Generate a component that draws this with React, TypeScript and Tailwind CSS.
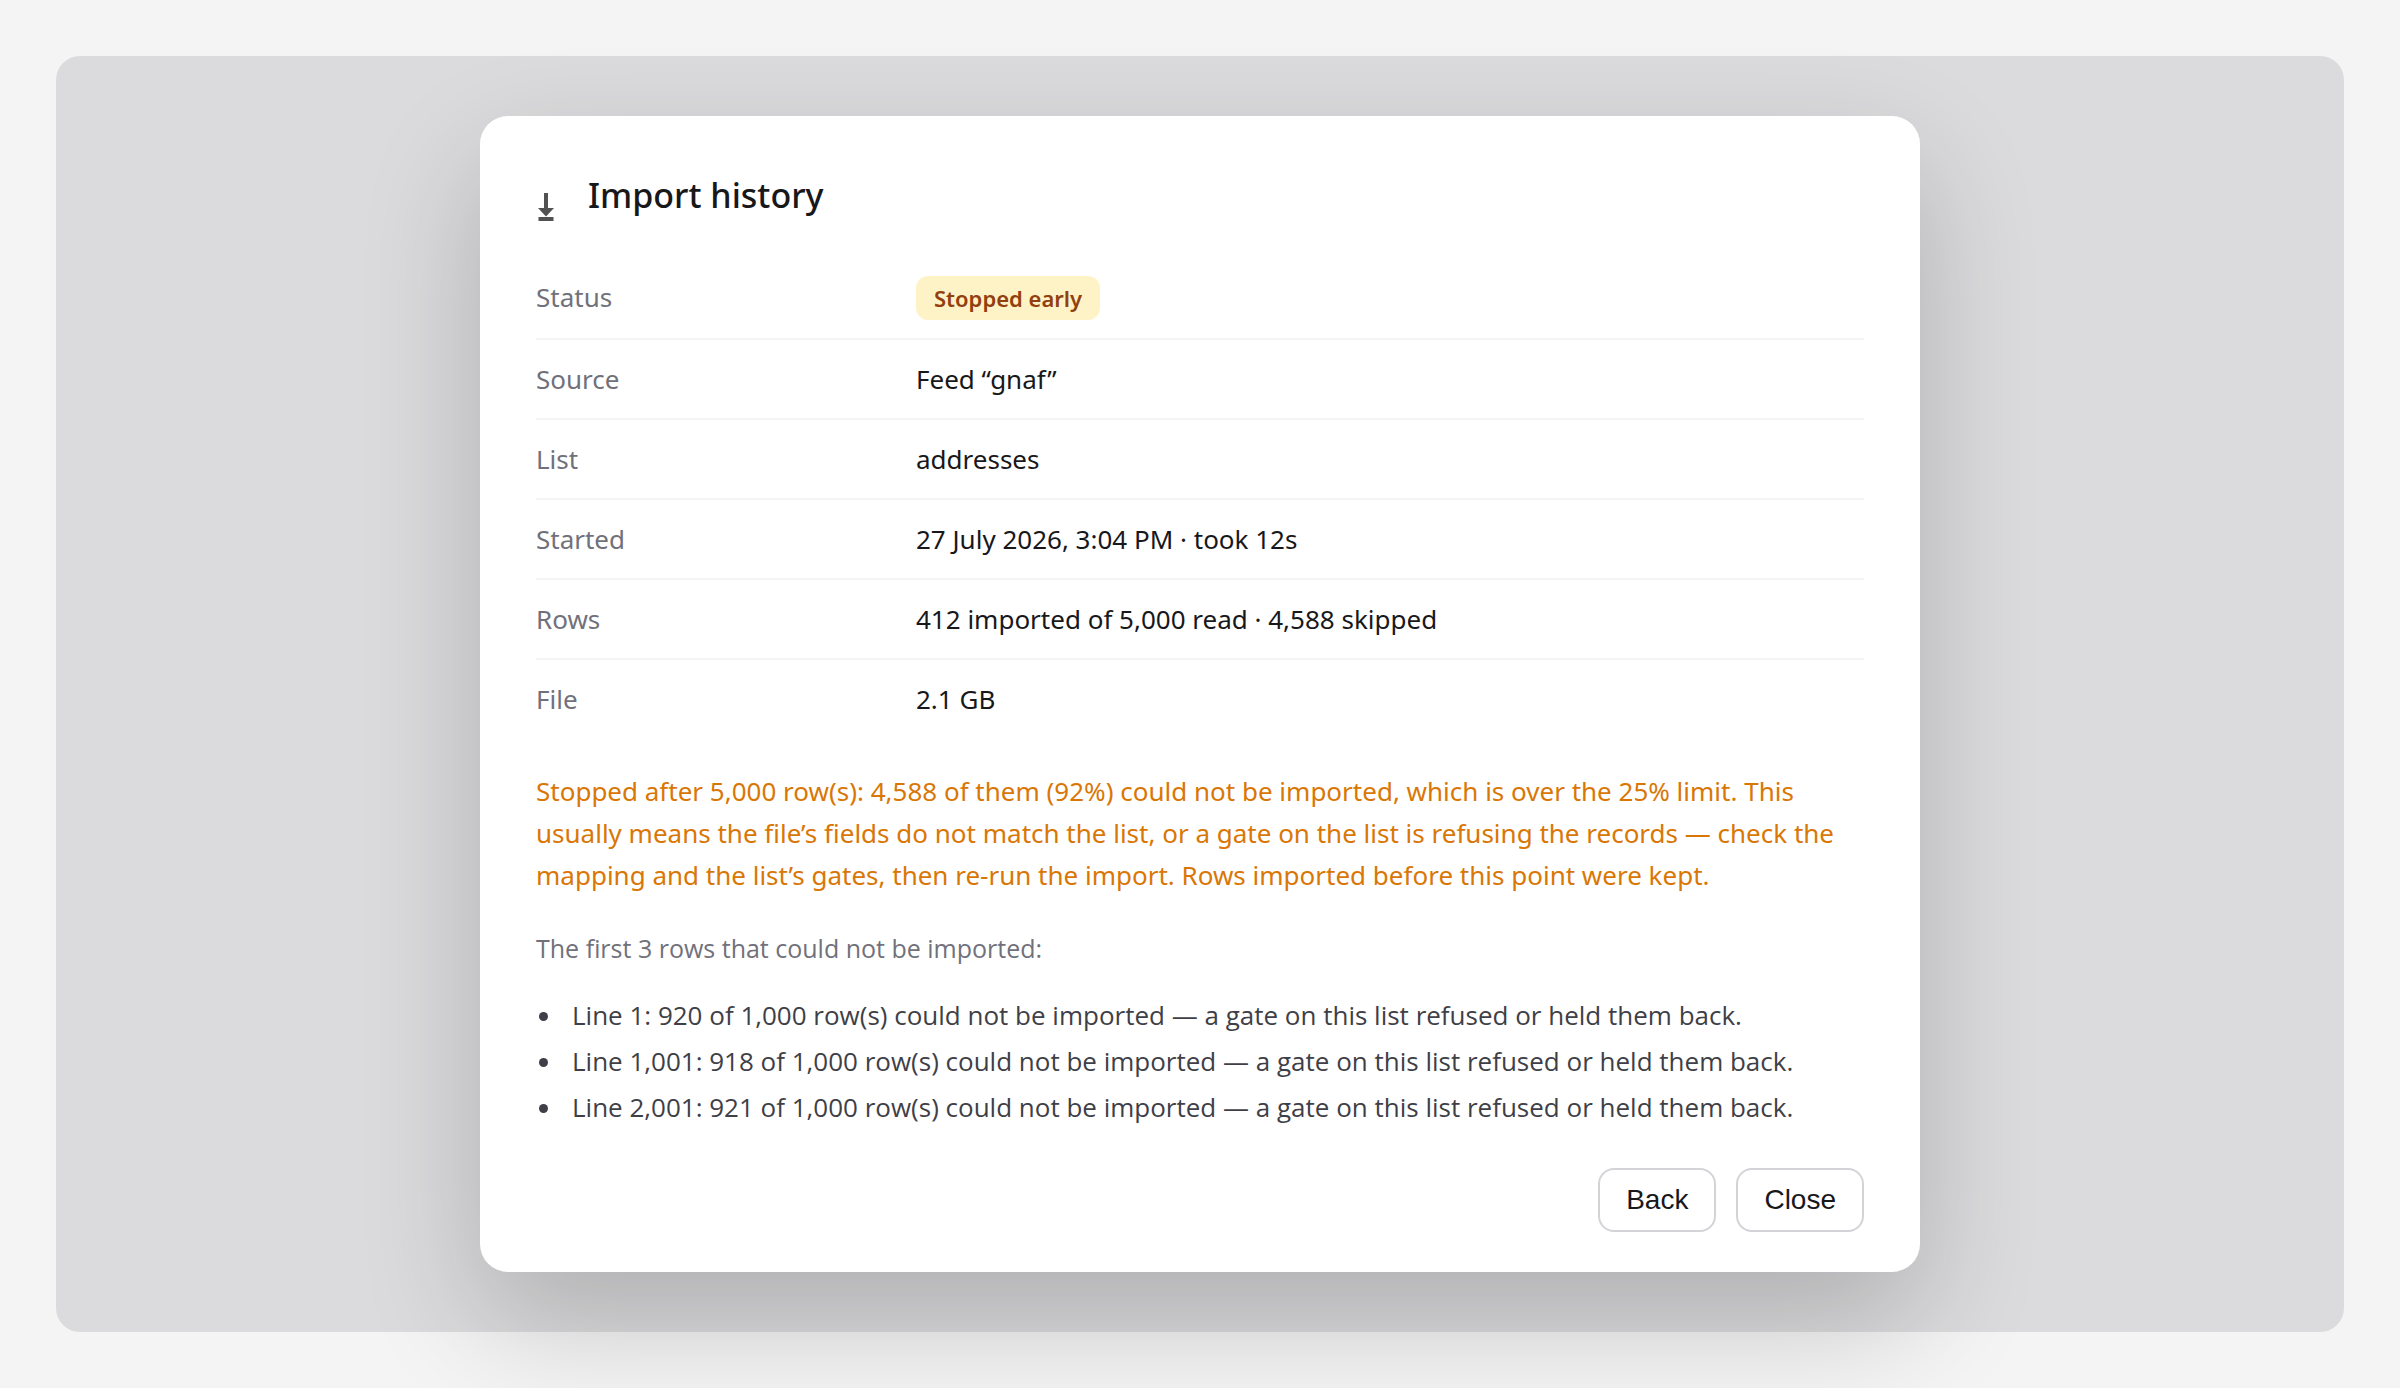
import { useState } from "react";

interface DetailRow {
  label: string;
  value: React.ReactNode;
}

const rows: DetailRow[] = [
  { label: "Status", value: <Badge>Stopped early</Badge> },
  { label: "Source", value: "Feed “gnaf”" },
  { label: "List", value: "addresses" },
  { label: "Started", value: "27 July 2026, 3:04 PM · took 12s" },
  { label: "Rows", value: "412 imported of 5,000 read · 4,588 skipped" },
  { label: "File", value: "2.1 GB" },
];

const failures = [
  "Line 1: 920 of 1,000 row(s) could not be imported — a gate on this list refused or held them back.",
  "Line 1,001: 918 of 1,000 row(s) could not be imported — a gate on this list refused or held them back.",
  "Line 2,001: 921 of 1,000 row(s) could not be imported — a gate on this list refused or held them back.",
];

function Badge({ children }: { children: React.ReactNode }) {
  return (
    <span className="flex h-11 items-center rounded-xl bg-[#fef3c7] px-[18px] text-[22px] font-semibold text-[#92400e]">
      {children}
    </span>
  );
}

function Field({ label, value }: DetailRow) {
  return (
    <div className="flex border-b-2 border-zinc-100 py-[18px] last:border-0">
      <dt className="w-[380px] shrink-0 text-zinc-500">{label}</dt>
      <dd className="flex text-zinc-900">{value}</dd>
    </div>
  );
}

function DialogButton({ children, onClick }: { children: React.ReactNode; onClick: () => void }) {
  return (
    <button
      type="button"
      onClick={onClick}
      className="h-16 rounded-2xl border-2 border-zinc-300 bg-white px-[26px] font-['Liberation_Sans',Arial,sans-serif] text-[28px] text-zinc-900"
    >
      {children}
    </button>
  );
}

function IconImport() {
  return (
    <svg width="20" height="28" viewBox="0 0 20 28" fill="#525252" className="mt-[21px] shrink-0" aria-hidden="true">
      <path d="M8 0h4v15h6l-8 8.500-8-8.500h6z" />
      <path d="M2.500 24h15v4h-15z" />
    </svg>
  );
}

export default function App() {
  const [open, setOpen] = useState(true);

  return (
    <div className="min-h-screen bg-[#f4f4f4] p-14 font-['Noto_Sans','Open_Sans',sans-serif] text-[26px] leading-[42px]">
      <main className="rounded-3xl bg-[#dbdbdd] px-14 py-[60px]">
        {open && (
          <div
            role="dialog"
            aria-labelledby="import-history-title"
            className="mx-auto w-full max-w-[1440px] rounded-[28px] bg-white px-14 pt-14 pb-10 shadow-[0_48px_120px_rgba(0,0,0,0.2)]"
          >
            <header className="flex h-12 items-start gap-8">
              <IconImport />
              <h2 id="import-history-title" className="text-[34px] leading-[46px] font-medium text-zinc-900">
                Import history
              </h2>
            </header>

            <dl className="mt-[38px]">
              {rows.map((row) => (
                <Field key={row.label} label={row.label} value={row.value} />
              ))}
            </dl>

            <p className="mt-8 text-[#d97706]">
              Stopped after 5,000 row(s): 4,588 of them (92%) could not be imported, which is over the 25% limit. This
              usually means the file’s fields do not match the list, or a gate on the list is refusing the records —
              check the mapping and the list’s gates, then re-run the import. Rows imported before this point were kept.
            </p>

            <div className="mt-8 font-['Open_Sans','Noto_Sans',sans-serif]">
              <p className="text-[25px] leading-10 text-zinc-500">The first 3 rows that could not be imported:</p>
              <ul className="mt-6 list-disc pl-7 text-[26px] leading-[46px] text-zinc-700">
                {failures.map((failure) => (
                  <li key={failure} className="pl-2">
                    {failure}
                  </li>
                ))}
              </ul>
            </div>

            <footer className="mt-[38px] flex justify-end gap-5">
              <DialogButton onClick={() => setOpen(false)}>Back</DialogButton>
              <DialogButton onClick={() => setOpen(false)}>Close</DialogButton>
            </footer>
          </div>
        )}
      </main>
    </div>
  );
}
